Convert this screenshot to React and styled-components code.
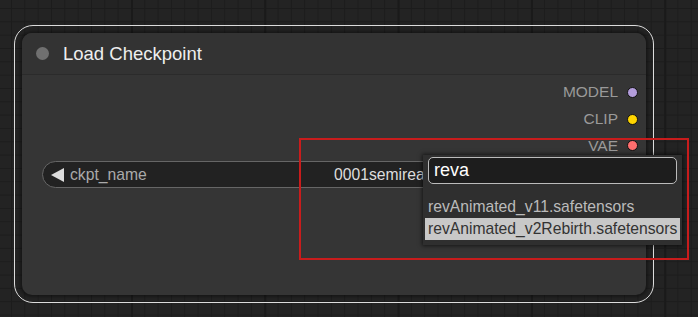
import React from 'react';
import styled, { createGlobalStyle } from 'styled-components';

const GlobalStyle = createGlobalStyle`
  html, body {
    margin: 0;
    padding: 0;
    background: #222;
  }
  body {
    font-family: "Liberation Sans", Arial, sans-serif;
  }
  * { box-sizing: border-box; }
`;

const Canvas = styled.div`
  position: relative;
  width: 698px;
  height: 317px;
  overflow: hidden;
  background-color: #232323;
  background-image:
    linear-gradient(90deg, #1a1a1a 2px, transparent 2px),
    linear-gradient(#1c1c1c 1px, transparent 1px),
    linear-gradient(90deg, #1c1c1c 1px, transparent 1px);
  background-size: 133.33px 100%, 13.333px 13.333px, 13.333px 13.333px;
  background-position: 131px 0, 0 8px, 11px 0;
`;

// node sits on the free canvas
const Node = styled.div`
  position: absolute;
  left: 22px;
  top: 33px;
  width: 624px;
  height: 262px;
  display: flex;
  flex-direction: column;
  background: #353535;
  border-radius: 10px;
  box-shadow: 0 0 3px 2px rgba(0, 0, 0, 0.35);
`;

const Selection = styled.div`
  position: absolute;
  inset: -8px;
  border: 1.5px solid #dcdcdc;
  border-radius: 19px;
  pointer-events: none;
`;

const TitleBar = styled.div`
  height: 42px;
  display: flex;
  align-items: center;
  gap: 14px;
  padding-left: 14px;
  background: #333;
  border-radius: 10px 10px 0 0;
  border-bottom: 1px solid #2b2b2b;
`;

const TitleDot = styled.span`
  width: 13px;
  height: 13px;
  border-radius: 50%;
  background: #707070;
`;

const Title = styled.span`
  color: #eee;
  font-size: 18.5px;
`;

const Outputs = styled.div`
  display: flex;
  flex-direction: column;
  padding: 4px 8.5px 0 0;
`;

const OutputRow = styled.div`
  height: 26.7px;
  display: flex;
  justify-content: flex-end;
  align-items: center;
  gap: 8.5px;
  color: #9a9a9a;
  font-size: 15.5px;
`;

const Slot = styled.span`
  width: 11px;
  height: 11px;
  border-radius: 50%;
  border: 1px solid #111;
  background: ${p => p.$color};
`;

const Widget = styled.div`
  margin: 2px 20px 0 20px;
  height: 27px;
  display: flex;
  align-items: center;
  padding-left: 8px;
  border-radius: 14px;
  border: 1px solid #666;
  background: #222;
  font-size: 15.7px;
  overflow: hidden;
`;

const Arrow = styled.span`
  width: 0;
  height: 0;
  border-top: 7px solid transparent;
  border-bottom: 7px solid transparent;
  border-right: 13px solid #ddd;
  margin-right: 6px;
`;

const Label = styled.span`
  width: 264px;
  color: #aaa;
`;

/* value is cut off where the search popup covers it */
const Value = styled.span`
  width: 91px;
  color: #ddd;
  white-space: nowrap;
  overflow: hidden;
`;

const Popup = styled.div`
  position: absolute;
  left: 423px;
  top: 155px;
  width: 259px;
  height: 90px;
  padding: 2px;
  display: flex;
  flex-direction: column;
  background: #2f2f2f;
  box-shadow: 0 0 4px 1px rgba(0, 0, 0, 0.6);
  z-index: 2;
`;

const Search = styled.div`
  margin: 0 3px;
  height: 27px;
  display: flex;
  align-items: center;
  padding-left: 5px;
  border: 1.5px solid #bbb;
  border-radius: 5px;
  background: #1d1d1d;
  color: #fff;
  font-size: 18px;
`;

const List = styled.div`
  margin-top: 12px;
  display: flex;
  flex-direction: column;
`;

const Item = styled.div`
  height: 22px;
  display: flex;
  align-items: center;
  padding-left: 3px;
  font-size: 15.7px;
  white-space: nowrap;
  color: ${p => (p.$active ? '#333' : '#bbb')};
  background: ${p => (p.$active ? '#c8c8c8' : 'transparent')};
`;

const Highlight = styled.div`
  position: absolute;
  left: 299px;
  top: 138px;
  width: 390px;
  height: 122px;
  border: 2px solid #c81c1c;
  z-index: 3;
  pointer-events: none;
`;

const outputs = [
  { name: 'MODEL', color: '#b39ddb' },
  { name: 'CLIP', color: '#ffd500' },
  { name: 'VAE', color: '#ff6e6e' },
];

export default function App() {
  return (
    <>
      <GlobalStyle />
      <Canvas>
        <Node>
          <Selection />
          <TitleBar>
            <TitleDot />
            <Title>Load Checkpoint</Title>
          </TitleBar>
          <Outputs>
            {outputs.map(o => (
              <OutputRow key={o.name}>
                {o.name}
                <Slot $color={o.color} />
              </OutputRow>
            ))}
          </Outputs>
          <Widget>
            <Arrow />
            <Label>ckpt_name</Label>
            <Value>0001semirealistic_v4.safetensors</Value>
          </Widget>
        </Node>
        <Popup>
          <Search>reva</Search>
          <List>
            <Item>revAnimated_v11.safetensors</Item>
            <Item $active>revAnimated_v2Rebirth.safetensors</Item>
          </List>
        </Popup>
        <Highlight />
      </Canvas>
    </>
  );
}
